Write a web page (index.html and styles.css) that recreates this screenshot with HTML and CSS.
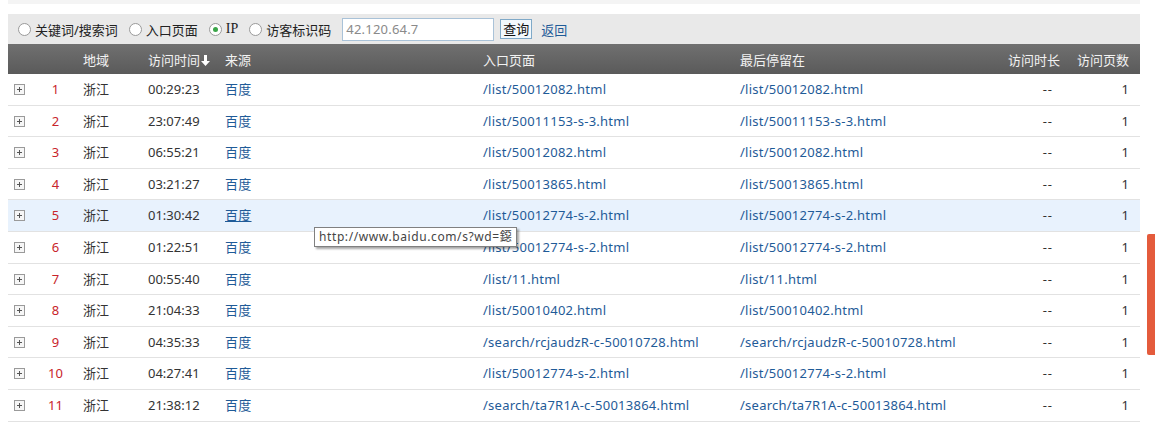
FILE: index.html
```html
<!DOCTYPE html>
<html lang="zh-CN">
<head>
  <meta charset="UTF-8" />
  <title>访客明细</title>
  <link rel="stylesheet" href="styles.css">
</head>
<body>
  <div class="top-strip"></div>

  <!-- 搜索条件 -->
  <div class="toolbar">
    <label class="opt"><span class="radio"></span>关键词/搜索词</label>
    <label class="opt"><span class="radio"></span>入口页面</label>
    <label class="opt"><span class="radio checked"></span><span class="ip">IP</span></label>
    <label class="opt"><span class="radio"></span>访客标识码</label>
    <input class="ip-input" type="text" value="42.120.64.7" />
    <button class="btn-query">查询</button>
    <a class="back" href="#">返回</a>
  </div>

  <table class="visits">
    <colgroup>
      <col class="c-exp"><col class="c-num"><col class="c-area"><col class="c-time">
      <col class="c-src"><col class="c-entry"><col class="c-last"><col class="c-dur"><col class="c-pages">
    </colgroup>
    <thead>
      <tr>
        <th></th>
        <th></th>
        <th>地域</th>
        <th>访问时间<svg class="sort" width="9" height="11" viewBox="0 0 9 11"><path d="M3 0h3v6h3l-4.5 5L0 6h3z" fill="#fff"/></svg></th>
        <th>来源</th>
        <th>入口页面</th>
        <th>最后停留在</th>
        <th class="r">访问时长</th>
        <th class="r last">访问页数</th>
      </tr>
    </thead>
    <tbody>
      <tr><td><span class="plus"></span></td><td class="num">1</td><td>浙江</td><td>00:29:23</td><td><a href="#">百度</a></td><td><a href="#">/list/50012082.html</a></td><td><a href="#">/list/50012082.html</a></td><td class="r">--</td><td class="r last">1</td></tr>
      <tr><td><span class="plus"></span></td><td class="num">2</td><td>浙江</td><td>23:07:49</td><td><a href="#">百度</a></td><td><a href="#">/list/50011153-s-3.html</a></td><td><a href="#">/list/50011153-s-3.html</a></td><td class="r">--</td><td class="r last">1</td></tr>
      <tr><td><span class="plus"></span></td><td class="num">3</td><td>浙江</td><td>06:55:21</td><td><a href="#">百度</a></td><td><a href="#">/list/50012082.html</a></td><td><a href="#">/list/50012082.html</a></td><td class="r">--</td><td class="r last">1</td></tr>
      <tr><td><span class="plus"></span></td><td class="num">4</td><td>浙江</td><td>03:21:27</td><td><a href="#">百度</a></td><td><a href="#">/list/50013865.html</a></td><td><a href="#">/list/50013865.html</a></td><td class="r">--</td><td class="r last">1</td></tr>
      <tr class="hover"><td><span class="plus"></span></td><td class="num">5</td><td>浙江</td><td>01:30:42</td><td><a href="#" class="u">百度</a></td><td><a href="#">/list/50012774-s-2.html</a></td><td><a href="#">/list/50012774-s-2.html</a></td><td class="r">--</td><td class="r last">1</td></tr>
      <tr><td><span class="plus"></span></td><td class="num">6</td><td>浙江</td><td>01:22:51</td><td><a href="#">百度</a></td><td><a href="#">/list/50012774-s-2.html</a></td><td><a href="#">/list/50012774-s-2.html</a></td><td class="r">--</td><td class="r last">1</td></tr>
      <tr><td><span class="plus"></span></td><td class="num">7</td><td>浙江</td><td>00:55:40</td><td><a href="#">百度</a></td><td><a href="#">/list/11.html</a></td><td><a href="#">/list/11.html</a></td><td class="r">--</td><td class="r last">1</td></tr>
      <tr><td><span class="plus"></span></td><td class="num">8</td><td>浙江</td><td>21:04:33</td><td><a href="#">百度</a></td><td><a href="#">/list/50010402.html</a></td><td><a href="#">/list/50010402.html</a></td><td class="r">--</td><td class="r last">1</td></tr>
      <tr><td><span class="plus"></span></td><td class="num">9</td><td>浙江</td><td>04:35:33</td><td><a href="#">百度</a></td><td><a href="#">/search/rcjaudzR-c-50010728.html</a></td><td><a href="#">/search/rcjaudzR-c-50010728.html</a></td><td class="r">--</td><td class="r last">1</td></tr>
      <tr><td><span class="plus"></span></td><td class="num">10</td><td>浙江</td><td>04:27:41</td><td><a href="#">百度</a></td><td><a href="#">/list/50012774-s-2.html</a></td><td><a href="#">/list/50012774-s-2.html</a></td><td class="r">--</td><td class="r last">1</td></tr>
      <tr><td><span class="plus"></span></td><td class="num">11</td><td>浙江</td><td>21:38:12</td><td><a href="#">百度</a></td><td><a href="#">/search/ta7R1A-c-50013864.html</a></td><td><a href="#">/search/ta7R1A-c-50013864.html</a></td><td class="r">--</td><td class="r last">1</td></tr>
    </tbody>
  </table>

  <!-- 浏览器提示框 -->
  <div class="tip">http://www.baidu.com/s?wd=鐚</div>

  <!-- 右侧悬浮标签 -->
  <div class="side-tab"></div>
</body>
</html>
```

FILE: styles.css
```css
/* 访客明细列表 */
body {
  margin: 0 15px 0 8px;
  font-family: "Noto Sans", "Noto Sans CJK SC", sans-serif;
  font-size: 13px;
  color: #333;
  background: #fff;
}

a {
  color: #1f5b98;
  text-decoration: none;
}

.top-strip {
  height: 4px;
  background: #f4f4f4;
  margin-bottom: 10px;
}

/* 工具栏 */
.toolbar {
  height: 30px;
  background: #e9e9e9;
  display: flex;
  align-items: center;
  padding-left: 10px;
}
.opt {
  display: flex;
  align-items: center;
  margin-right: 11px;
  color: #222;
}
.radio {
  width: 11px;
  height: 11px;
  border: 1px solid #9a9a9a;
  border-radius: 50%;
  background: #fff;
  margin-right: 4px;
  position: relative;
}
.radio.checked::after {
  content: "";
  position: absolute;
  left: 3px;
  top: 3px;
  width: 5px;
  height: 5px;
  border-radius: 50%;
  background: #3aa548;
}
.ip {
  font-family: "Liberation Serif", serif;
  font-size: 14px;
}
.ip-input {
  width: 144px;
  height: 17px;
  padding: 2px 3px;
  border: 1px solid #a9c2d8;
  font: 13px "Noto Sans", sans-serif;
  letter-spacing: 0.2px;
  color: #8a8a8a;
  margin-right: 6px;
}
.btn-query {
  height: 20px;
  padding: 0 2px;
  border: 1px solid #7fa9c8;
  background: #f2f8fc;
  font: 13px "Noto Sans CJK SC", sans-serif;
  color: #111;
  line-height: 16px;
  margin-right: 9px;
}

/* 表格 */
.visits {
  width: 100%;
  border-collapse: collapse;
  table-layout: fixed;
}
.c-exp { width: 28px; }
.c-num { width: 39px; }
.c-area { width: 65px; }
.c-time { width: 77px; }
.c-src { width: 258px; }
.c-entry { width: 257px; }
.c-last { width: 268px; }
.c-dur { width: 61px; }
.c-pages { width: 79px; }

.visits th {
  height: 30px;
  padding: 0 0 0 8px;
  background: linear-gradient(#707070, #5a5a5a);
  color: #f2f2f2;
  font-weight: normal;
  text-align: left;
  white-space: nowrap;
}
.visits td {
  padding: 6px 0 6px 8px;
  line-height: 18.6px;
  border-bottom: 1px solid #e2e2e2;
  white-space: nowrap;
}
.visits td a { letter-spacing: 0.25px; }
.visits th.r,
.visits td.r { text-align: right; padding-right: 8px; }
.visits th.last,
.visits td.last { padding-right: 11px; }
.visits td.r { letter-spacing: 1px; }
.visits td.last { letter-spacing: 0; }
.visits td.num {
  color: #c8242b;
  text-align: center;
  padding-left: 0;
}
.visits tr.hover td { background: #e8f2fd; }
.visits a.u { text-decoration: underline; }

.sort { margin-left: 1px; vertical-align: -1px; }

.plus {
  display: inline-block;
  width: 9px;
  height: 9px;
  border: 1px solid #9a9a9a;
  background:
    linear-gradient(#555, #555) center / 5px 1px no-repeat,
    linear-gradient(#555, #555) center / 1px 5px no-repeat,
    #f6f6f6;
  vertical-align: -1px;
  margin-left: -2px;
}

/* 提示框 */
.tip {
  position: absolute;
  left: 314px;
  top: 227px;
  padding: 0 4px;
  height: 18px;
  line-height: 18px;
  font-size: 12px;
  letter-spacing: 0.6px;
  color: #444;
  background: #fff;
  border: 1px solid #808080;
  box-shadow: 2px 2px 2px rgba(0, 0, 0, 0.35);
}

.side-tab {
  position: absolute;
  right: 0;
  top: 234px;
  width: 8px;
  height: 121px;
  background: #e45b3c;
  border-radius: 2px 0 0 2px;
}
```
